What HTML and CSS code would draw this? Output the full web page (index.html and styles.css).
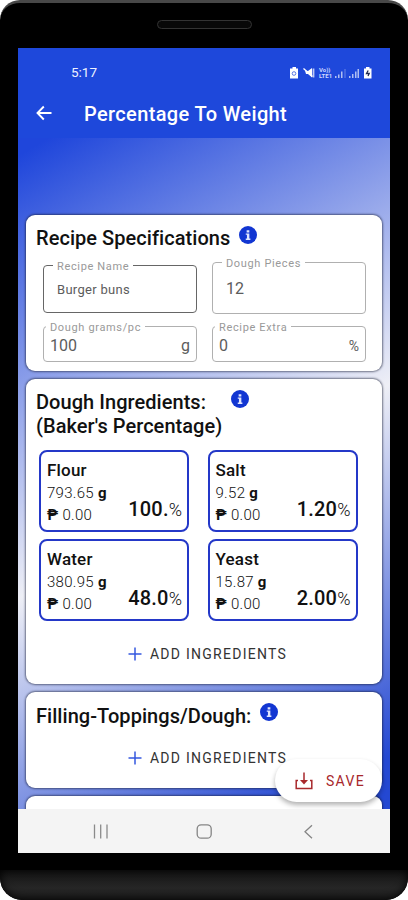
FILE: index.html
```html
<!DOCTYPE html>
<html lang="en">
  <head>
    <meta charset="utf-8" />
    <title>Percentage To Weight</title>
    <link rel="stylesheet" href="styles.css">
  </head>

  <body>
    <svg class="defs" width="0" height="0">
      <symbol id="info" viewBox="0 0 24 24">
        <circle cx="12" cy="12" r="12" fill="#1236d2" />
        <path d="M10.200 5.500h3.600v3h-3.600zM9 10h4.800v6.800h1.400v1.700H9v-1.700h1.600v-5H9z" fill="#dfe5ff" />
      </symbol>
      <symbol id="plus" viewBox="0 0 14 14">
        <path d="M7 .5v13M.5 7h13" stroke="#3558df" stroke-width="1.500" fill="none" />
      </symbol>
    </svg>

    <div class="phone">
      <div class="speaker"></div>

      <div class="screen">
        <header class="top">
          <div class="status-bar">
            <span class="time">5:17</span>
            <div class="status-icons">
              <svg width="28" height="14" viewBox="0 0 28 14">
                <path d="M2.500 1h3.500v1.500h2V12.500h-8V2.500h2.500z" fill="#fff" />
                <circle cx="4" cy="7.500" r="1.800" fill="none" stroke="#5a78e4" />
                <path d="M15 4.500l3 .5 4-3v9.500l-4-3.500h-2z" fill="#fff" />
                <path d="M13.500 2.500l9 8" stroke="#fff" stroke-width="1.400" />
                <path d="M23.500 2.500v9" stroke="#fff" stroke-width="1.800" opacity=".7" />
              </svg>
              <span class="volte">Vo))<br>LTE1</span>
              <svg width="40" height="14" viewBox="0 0 40 14">
                <g fill="#fff">
                  <path d="M1 12v-2h1.500v2zM4 12V8.500h1.500V12zM7 12V5.500h1.500V12z" opacity=".65" />
                  <path d="M10.500 12V3h1v9z" opacity=".35" />
                  <path d="M15 12v-2h1.500v2zM18 12V8h1.500v4zM21 12V5.500h1.500V12zM23.500 12V3H25v9z" opacity=".65" />
                  <path d="M32 1h3.500v1.500h2V12.500h-7.500V2.500h2z" />
                </g>
                <path d="M34.200 4.500L32.500 7.500h2.700l-1.200 2.500" fill="none" stroke="#222b50" stroke-width="1.300" />
              </svg>
            </div>
          </div>
          <div class="app-bar">
            <svg width="16" height="16" viewBox="0 0 16 16">
              <path d="M7.800 1.500L1.500 8l6.300 6.500M1.500 8H15.500" fill="none" stroke="#fff" stroke-width="1.900" />
            </svg>
            <h1>Percentage To Weight</h1>
          </div>
        </header>

        <main class="content">
          <section class="card specs">
            <div class="card-title">
              <h2>Recipe Specifications</h2>
              <svg class="info"><use href="#info" /></svg>
            </div>
            <div class="fields">
              <fieldset class="field name">
                <legend>Recipe Name</legend>
                <span>Burger buns</span>
              </fieldset>
              <fieldset class="field pieces">
                <legend>Dough Pieces</legend>
                <span>12</span>
              </fieldset>
              <fieldset class="field small">
                <legend>Dough grams/pc</legend>
                <span>100</span><span>g</span>
              </fieldset>
              <fieldset class="field small">
                <legend>Recipe Extra</legend>
                <span>0</span><span class="unit">%</span>
              </fieldset>
            </div>
          </section>

          <section class="card dough">
            <div class="card-title">
              <h2>Dough Ingredients:<br>(Baker's Percentage)</h2>
              <svg class="info"><use href="#info" /></svg>
            </div>
            <div class="ingredients">
              <div class="ingredient">
                <h3>Flour</h3>
                <p>793.65 <b>g</b></p>
                <p><b>₱</b> 0.00</p>
                <div class="percent"><b>100.</b>%</div>
              </div>
              <div class="ingredient">
                <h3>Salt</h3>
                <p>9.52 <b>g</b></p>
                <p><b>₱</b> 0.00</p>
                <div class="percent"><b>1.20</b>%</div>
              </div>
              <div class="ingredient">
                <h3>Water</h3>
                <p>380.95 <b>g</b></p>
                <p><b>₱</b> 0.00</p>
                <div class="percent"><b>48.0</b>%</div>
              </div>
              <div class="ingredient">
                <h3>Yeast</h3>
                <p>15.87 <b>g</b></p>
                <p><b>₱</b> 0.00</p>
                <div class="percent"><b>2.00</b>%</div>
              </div>
            </div>
            <div class="add"><svg><use href="#plus" /></svg>ADD INGREDIENTS</div>
          </section>

          <section class="card filling">
            <div class="card-title">
              <h2>Filling-Toppings/Dough:</h2>
              <svg class="info"><use href="#info" /></svg>
            </div>
            <div class="add"><svg><use href="#plus" /></svg>ADD INGREDIENTS</div>
          </section>

          <section class="card next"></section>

          <div class="save">
            <svg width="18" height="18" viewBox="0 0 18 18">
              <path d="M3 8.500H1.200v8h15.600v-8H15M9 .5v10" fill="none" stroke="#a8282c" stroke-width="1.500" />
              <path d="M5 8h8l-4 4.500z" fill="#a8282c" />
            </svg>
            SAVE
          </div>
        </main>

        <nav class="nav-bar">
          <svg width="16" height="16" viewBox="0 0 16 16">
            <path d="M2.500 1.500v14M8.700 1.500v14M15 1.500v14" stroke="#8a8a8a" stroke-width="1.300" />
          </svg>
          <svg width="16" height="16" viewBox="0 0 16 16">
            <rect x="1.200" y="1.800" width="14" height="13.400" rx="4" fill="none" stroke="#858585" stroke-width="1.300" />
          </svg>
          <svg width="16" height="16" viewBox="0 0 16 16">
            <path d="M12 2.200L5 8.700l7 6.500" fill="none" stroke="#858585" stroke-width="1.300" />
          </svg>
        </nav>
      </div>

      <div class="chin"></div>
    </div>
  </body>
</html>
```

FILE: styles.css
```css
* {
  margin: 0;
  padding: 0;
  box-sizing: border-box;
}
body {
  background: #fff;
  font-family: Roboto, "Liberation Sans", sans-serif;
  color: #111;
  overflow: hidden;
}
svg {
  display: block;
  flex-shrink: 0;
}
.defs {
  position: absolute;
}
.phone {
  width: 408px;
  height: 900px;
  display: flex;
  flex-direction: column;
  align-items: center;
  background: #000;
  border-top: 3px solid #484848;
  border-radius: 20px 20px 22px 22px;
  overflow: hidden;
}
.speaker {
  width: 95px;
  height: 9px;
  margin: 17px 0 19px;
  border: 1px solid #333;
  border-radius: 5px;
  background: #080808;
  flex-shrink: 0;
}
.screen {
  width: 372px;
  height: 805px;
  flex-shrink: 0;
  display: flex;
  flex-direction: column;
}
.chin {
  width: 408px;
  height: 30px;
  margin-top: 17px;
  background: linear-gradient(#141414, #262626 60%, #1c1c1c);
  box-shadow: inset 0 0 10px #000;
  border-radius: 0 0 22px 22px;
}

/* header */
.top {
  height: 90px;
  background: #1e48db;
  color: #fff;
}
.status-bar {
  height: 42px;
  padding: 10px 16px 0 53px;
  display: flex;
  justify-content: space-between;
}
.time {
  font-size: 13.5px;
  line-height: 29px;
  color: #eef2ff;
}
.status-icons {
  display: flex;
  margin-top: 8px;
}
.volte {
  width: 16px;
  padding: 1px 0 0 1px;
  font-size: 6px;
  font-weight: 700;
  line-height: 6px;
  color: #cdd8ff;
}
.app-bar {
  display: flex;
  gap: 32px;
  padding: 15px 0 0 18px;
}
h1 {
  font-size: 20px;
  font-weight: 500;
  line-height: 19px;
  letter-spacing: 0.36px;
}

/* cards */
.content {
  position: relative;
  height: 671px;
  padding: 77px 8px 0;
  display: flex;
  flex-direction: column;
  gap: 8px;
  overflow: hidden;
  background: linear-gradient(150deg, #1f46db 2%, #eeeff6 52%, #2448d2 94%);
}
.card {
  width: 356px;
  flex-shrink: 0;
  background: #fff;
  border-radius: 9px;
  box-shadow: 0 0 2px 1px rgba(20, 25, 50, 0.55);
}
.card-title {
  display: flex;
  gap: 9px;
  padding-left: 10px;
}
h2 {
  font-size: 20px;
  font-weight: 500;
  line-height: 24px;
  letter-spacing: 0.05px;
}
.info {
  width: 18px;
  height: 18px;
}
.specs {
  height: 156px;
  padding-top: 11px;
}
.dough {
  height: 305px;
  padding-top: 11px;
}
.filling {
  height: 96px;
  padding-top: 12px;
}
.filling .info {
  margin-top: -1px;
}
.next {
  height: 60px;
}

/* outlined inputs */
.fields {
  display: grid;
  grid-template-columns: 154px 154px;
  grid-template-rows: 64px 44px;
  column-gap: 15px;
  row-gap: 4px;
  padding-left: 17px;
  align-items: end;
}
.field {
  min-width: 0;
  border: 1px solid #b0b0b0;
  border-radius: 4px;
  display: flex;
  justify-content: space-between;
  font-size: 16px;
  color: #5c5c5c;
}
.field legend {
  padding: 4px 4px 0;
  margin-left: 9px;
  font-size: 11px;
  line-height: 12px;
  letter-spacing: 0.65px;
  color: #999;
}
.field span {
  line-height: 20px;
}
.name {
  height: 56px;
  margin-bottom: 1px;
  border-color: #666;
  font-size: 13px;
  letter-spacing: 0.3px;
}
.name span {
  padding: 7px 13px;
}
.pieces {
  height: 60px;
}
.pieces span {
  padding: 9px 13px;
}
.field.small {
  height: 44px;
  padding: 0 6px;
}
.field.small legend {
  margin-left: -4px;
}
.field.small span {
  line-height: 24px;
}
.field .unit {
  font-size: 14px;
}

/* ingredient tiles */
.ingredients {
  display: grid;
  grid-template-columns: 150px 150px;
  grid-template-rows: 82px 82px;
  column-gap: 18.5px;
  row-gap: 7px;
  padding: 12px 0 0 13px;
}
.ingredient {
  display: grid;
  grid-template-columns: 1fr auto;
  grid-template-rows: 25px 22px 21px;
  padding: 6px 5px 0 6px;
  border: 2px solid #2438c8;
  border-radius: 8px;
}
h3 {
  grid-column: 1 / 3;
  font-size: 17px;
  font-weight: 500;
  line-height: 24px;
  letter-spacing: 0.2px;
}
.ingredient p {
  grid-column: 1;
  font-size: 15px;
  font-weight: 300;
  line-height: 21px;
  letter-spacing: 0.3px;
}
.ingredient p b {
  font-weight: 700;
}
.percent {
  grid-column: 2;
  grid-row: 2 / 4;
  align-self: end;
  font-size: 18px;
  font-weight: 300;
  line-height: 33px;
}
.percent b {
  font-size: 20px;
  font-weight: 500;
  letter-spacing: 0.2px;
}
.add {
  display: flex;
  justify-content: center;
  gap: 8px;
  padding-left: 7px;
  font-size: 14px;
  line-height: 17px;
  letter-spacing: 1.26px;
  color: #333;
}
.add svg {
  width: 14px;
  height: 14px;
  margin-top: 1px;
}
.dough .add {
  margin-top: 25px;
}
.filling .add {
  margin-top: 22px;
}

/* floating button over the list */
.save {
  position: absolute;
  right: 8px;
  bottom: 7px;
  width: 107px;
  height: 43px;
  padding-left: 20px;
  display: flex;
  align-items: center;
  gap: 13px;
  background: #fff;
  border-radius: 22px;
  box-shadow: 0 3px 5px rgba(0, 0, 0, 0.3);
  font-size: 14px;
  letter-spacing: 1.3px;
  color: #a8282c;
}

.nav-bar {
  height: 44px;
  padding: 0 74px;
  display: flex;
  justify-content: space-between;
  align-items: center;
  background: #f4f4f4;
}
```
